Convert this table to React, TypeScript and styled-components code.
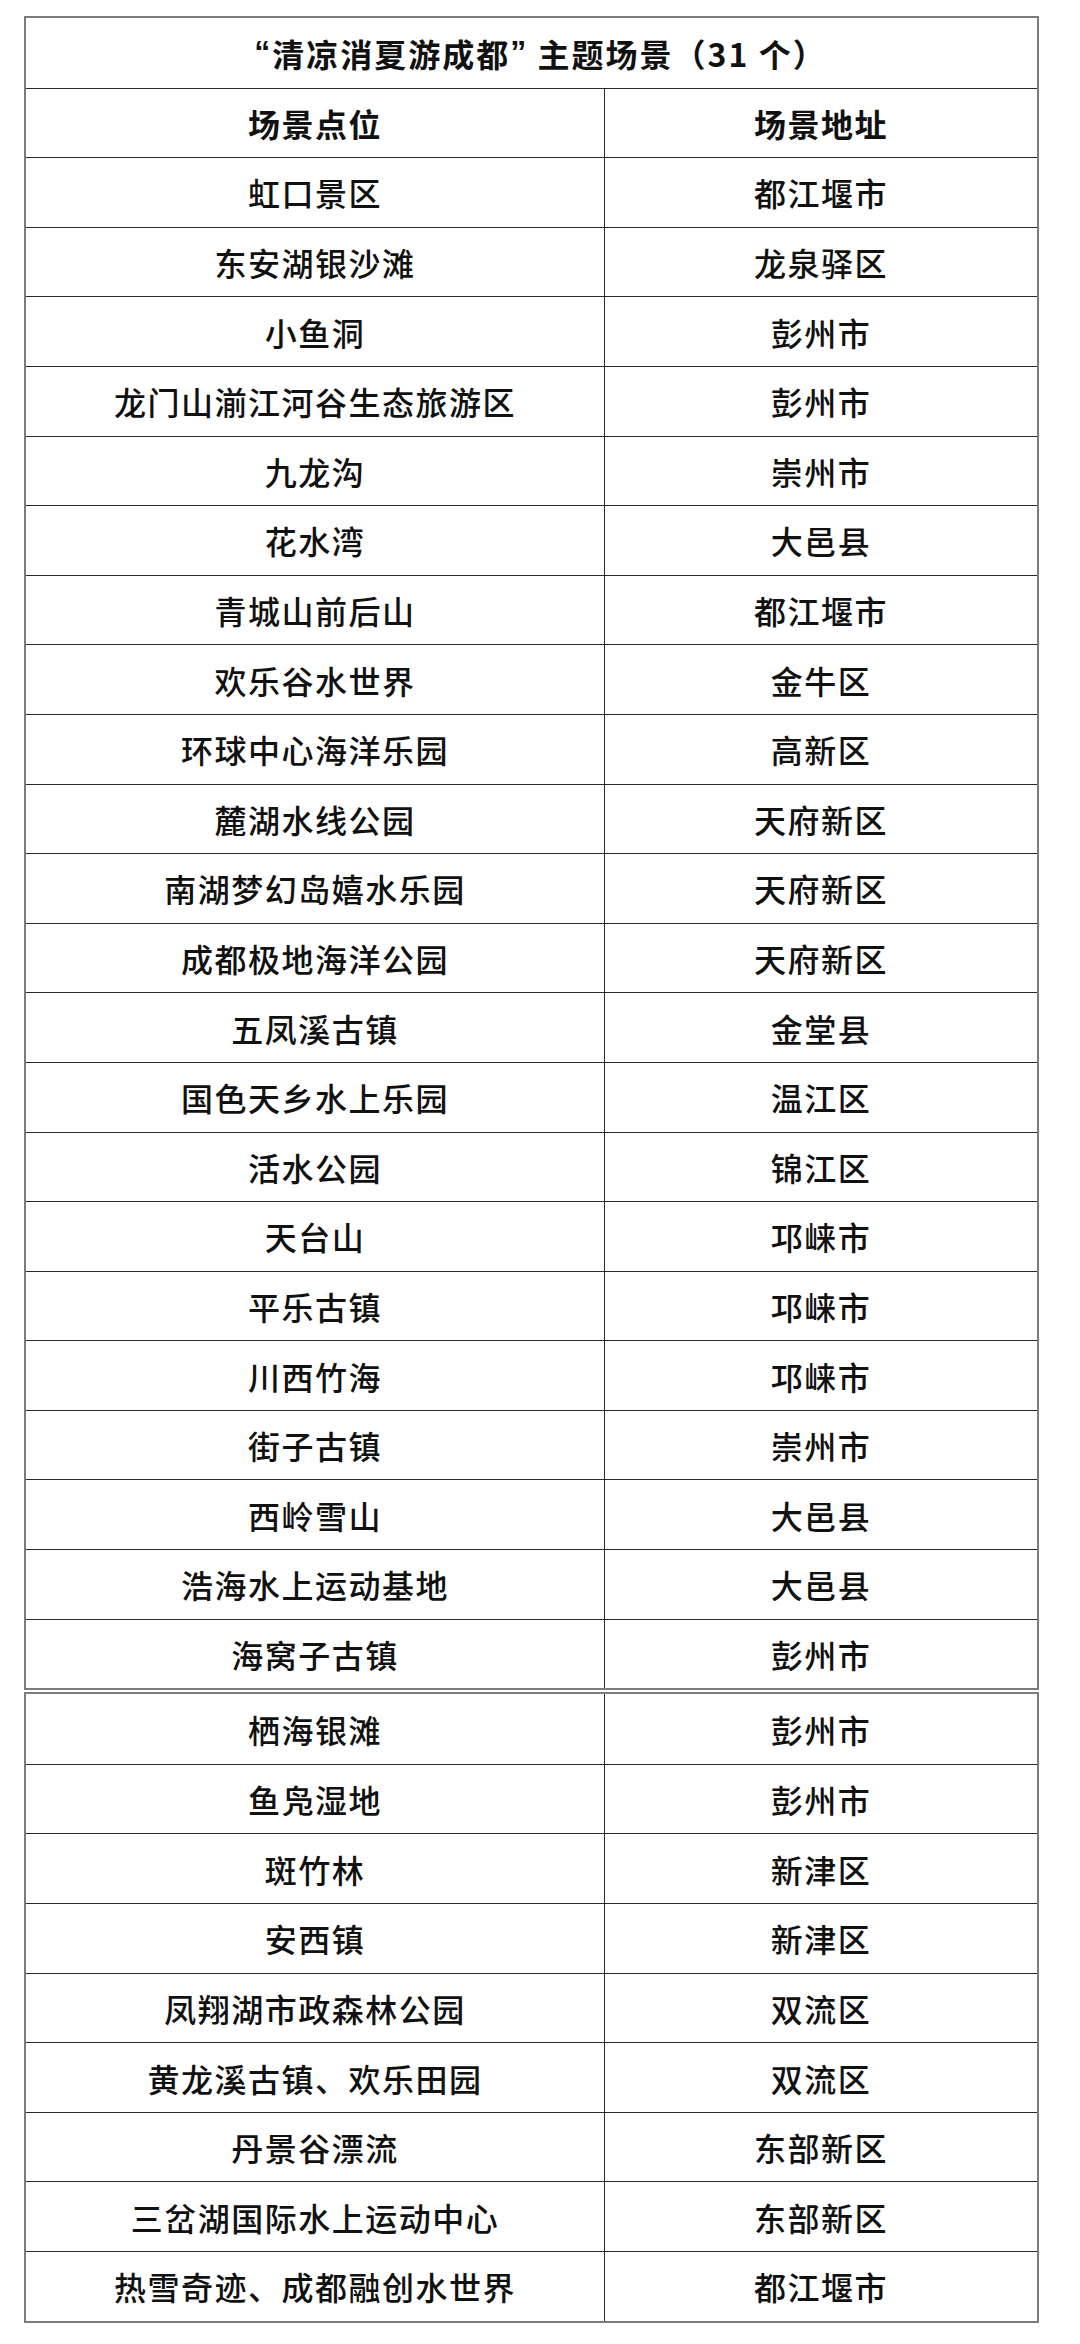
import styled, { createGlobalStyle } from 'styled-components';

const GlobalStyle = createGlobalStyle`
  html, body {
    margin: 0;
    padding: 0;
    background: #ffffff;
  }
  body {
    font-family: "Noto Sans CJK SC", "Noto Sans", sans-serif;
    color: #111111;
  }
`;

type Spot = { name: string; place: string };

const firstPart: Spot[] = [
  { name: '虹口景区', place: '都江堰市' },
  { name: '东安湖银沙滩', place: '龙泉驿区' },
  { name: '小鱼洞', place: '彭州市' },
  { name: '龙门山湔江河谷生态旅游区', place: '彭州市' },
  { name: '九龙沟', place: '崇州市' },
  { name: '花水湾', place: '大邑县' },
  { name: '青城山前后山', place: '都江堰市' },
  { name: '欢乐谷水世界', place: '金牛区' },
  { name: '环球中心海洋乐园', place: '高新区' },
  { name: '麓湖水线公园', place: '天府新区' },
  { name: '南湖梦幻岛嬉水乐园', place: '天府新区' },
  { name: '成都极地海洋公园', place: '天府新区' },
  { name: '五凤溪古镇', place: '金堂县' },
  { name: '国色天乡水上乐园', place: '温江区' },
  { name: '活水公园', place: '锦江区' },
  { name: '天台山', place: '邛崃市' },
  { name: '平乐古镇', place: '邛崃市' },
  { name: '川西竹海', place: '邛崃市' },
  { name: '街子古镇', place: '崇州市' },
  { name: '西岭雪山', place: '大邑县' },
  { name: '浩海水上运动基地', place: '大邑县' },
  { name: '海窝子古镇', place: '彭州市' },
];

const secondPart: Spot[] = [
  { name: '栖海银滩', place: '彭州市' },
  { name: '鱼凫湿地', place: '彭州市' },
  { name: '斑竹林', place: '新津区' },
  { name: '安西镇', place: '新津区' },
  { name: '凤翔湖市政森林公园', place: '双流区' },
  { name: '黄龙溪古镇、欢乐田园', place: '双流区' },
  { name: '丹景谷漂流', place: '东部新区' },
  { name: '三岔湖国际水上运动中心', place: '东部新区' },
  { name: '热雪奇迹、成都融创水世界', place: '都江堰市' },
];

const Page = styled.div`
  padding: 16px 0 21px 24px;
  display: flex;
  flex-direction: column;
  gap: 2px;
`;

const Sheet = styled.div`
  width: 1015px;
  box-sizing: border-box;
  border: 2px solid #7c7c7c;
  display: flex;
  flex-direction: column;
`;

const Row = styled.div<{ $first?: boolean }>`
  display: grid;
  grid-template-columns: 578px 1fr;
  height: 69.6px;
  box-sizing: border-box;
  border-top: ${(p) => (p.$first ? 'none' : '1px solid #2a2a2a')};
`;

const TitleRow = styled.div`
  height: 69.6px;
  display: flex;
  align-items: center;
  justify-content: center;
  font-size: 32px;
  font-weight: 700;
  letter-spacing: 2px;
  padding-left: 18px;
`;

const Quote = styled.span`
  font-family: "Liberation Sans", sans-serif;
  font-weight: 700;
`;

const Cell = styled.div<{ $head?: boolean; $right?: boolean }>`
  display: flex;
  align-items: center;
  justify-content: center;
  font-size: 32px;
  letter-spacing: 1.5px;
  font-weight: ${(p) => (p.$head ? 700 : 500)};
  border-left: ${(p) => (p.$right ? '1px solid #2a2a2a' : 'none')};
  white-space: nowrap;
`;

const SpotRow = ({ spot, first }: { spot: Spot; first?: boolean }) => (
  <Row $first={first}>
    <Cell>{spot.name}</Cell>
    <Cell $right>{spot.place}</Cell>
  </Row>
);

const App = () => {
  return (
    <>
      <GlobalStyle />
      <Page>
        <Sheet>
          <TitleRow>
            <Quote>“</Quote>清凉消夏游成都<Quote>”</Quote>&nbsp;主题场景（31 个）
          </TitleRow>
          <Row>
            <Cell $head>场景点位</Cell>
            <Cell $head $right>场景地址</Cell>
          </Row>
          {firstPart.map((s) => (
            <SpotRow key={s.name} spot={s} />
          ))}
        </Sheet>
        <Sheet>
          {secondPart.map((s, i) => (
            <SpotRow key={s.name} spot={s} first={i === 0} />
          ))}
        </Sheet>
      </Page>
    </>
  );
};

export default App;
